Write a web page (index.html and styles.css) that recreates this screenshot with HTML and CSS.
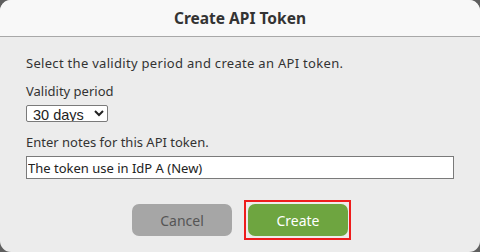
FILE: index.html
```html
<!DOCTYPE html>
<html>
<head>
<meta charset="utf-8">
<link rel="stylesheet" href="styles.css">
</head>
<body>
<div class="dialog">
  <div class="header">Create API Token</div>
  <div class="content">
    <p class="intro">Select the validity period and create an API token.</p>
    <label class="label">Validity period</label>
    <select class="period">
      <option>30 days</option>
    </select>
    <label class="label notes-label">Enter notes for this API token.</label>
    <input class="notes" type="text" value="The token use in IdP A (New)">
    <div class="actions">
      <button class="btn cancel">Cancel</button>
      <span class="highlight"><button class="btn create">Create</button></span>
    </div>
  </div>
</div>
</body>
</html>
```
FILE: styles.css
```css
html, body {
  margin: 0;
  padding: 0;
  width: 480px;
  height: 252px;
  background: #5f5f5f;
  overflow: hidden;
}
.dialog {
  width: 480px;
  height: 252px;
  background: #ececec;
  border-radius: 11px;
  overflow: hidden;
  font-family: "Noto Sans", sans-serif;
  color: #333;
  display: flex;
  flex-direction: column;
}
.header {
  height: 36px;
  background: #f8f8f8;
  border-bottom: 1px solid #a8a8a8;
  display: flex;
  align-items: center;
  justify-content: center;
  font-weight: bold;
  font-size: 15.5px;
  color: #333;
}
.content {
  padding: 0 26px;
  display: flex;
  flex-direction: column;
  align-items: flex-start;
  font-size: 13px;
}
.intro {
  margin: 17px 0 0;
  line-height: 18px;
  letter-spacing: 0.3px;
}
.label {
  display: block;
  line-height: 18px;
  margin-top: 10px;
}
.period {
  margin-top: 5px;
  width: 82px;
  height: 17px;
  box-sizing: border-box;
  font-family: "Liberation Sans", Arial, sans-serif;
  font-size: 14.5px;
  color: #222;
  border: 1px solid #7a7a7a;
  border-radius: 2px;
  background: #fff;
  padding: 0 0 0 2px;
  line-height: 15px;
}
.notes-label {
  margin-top: 11px;
}
.notes {
  margin-top: 5px;
  width: 428px;
  height: 23px;
  box-sizing: border-box;
  border: 1px solid #7a7a7a;
  background: #fff;
  font-family: "Noto Sans", sans-serif;
  font-size: 13px;
  color: #222;
  padding: 0 1px;
}
.actions {
  align-self: stretch;
  display: flex;
  justify-content: center;
  gap: 12px;
  margin-top: 25px;
  padding-left: 3px;
}
.highlight {
  border: 2px solid #ee1c1c;
  padding: 2px 1px 2px 2px;
  margin: -4px 0;
  display: flex;
}
.btn {
  width: 100px;
  height: 32px;
  border: none;
  border-radius: 7px;
  font-family: "Noto Sans", sans-serif;
  font-size: 14px;
}
.cancel {
  background: #a6a6a6;
  color: #555;
}
.create {
  background: #6ea540;
  color: #fff;
}
```
